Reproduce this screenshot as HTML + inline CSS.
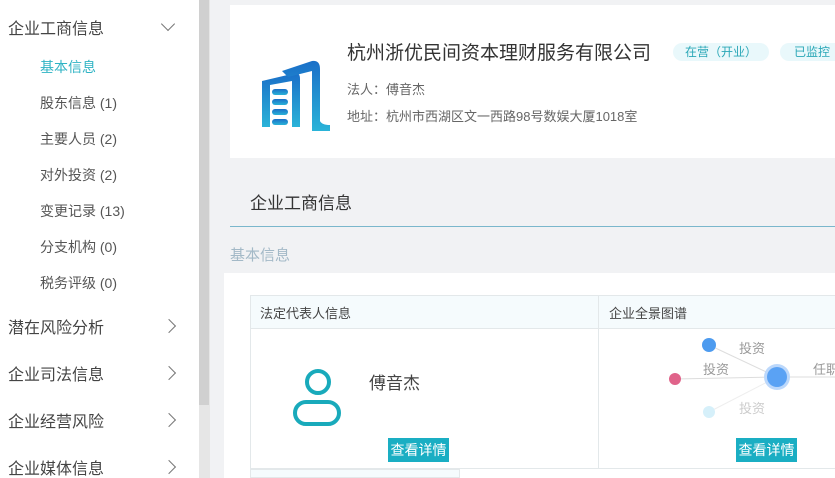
<!DOCTYPE html>
<html><head><meta charset="utf-8"><style>
*{margin:0;padding:0;box-sizing:border-box}
html,body{width:835px;height:478px;overflow:hidden}
body{background:#f1f2f4;font-family:"Liberation Sans","Noto Sans CJK SC",sans-serif;position:relative;color:#333}
.side{position:absolute;left:0;top:0;width:199px;height:478px;background:#fff}
.sb{position:absolute;left:199px;top:0;width:11px;height:478px;background:#e6e6e6}
.thumb{position:absolute;left:199px;top:0;width:10px;height:405px;background:#d0d0d0}
.h{position:absolute;left:8px;font-size:16px;color:#444}
.s{position:absolute;left:40px;font-size:14px;color:#555}
.arr{position:absolute;left:163px;width:10px;height:10px;border-right:1.5px solid #777;border-bottom:1.5px solid #777}
.abs{position:absolute}
.tag{position:absolute;top:38px;height:18px;line-height:18px;font-size:12px;color:#2aa7b7;background:#e9f8fb;border-radius:9px;text-align:center}
.btn{position:absolute;width:61px;height:24px;background:#1aaec3;color:#fff;font-size:14px;line-height:24px;text-align:center}
</style></head><body>
<div class="side">
<div class="h" style="top:15px">企业工商信息</div>
<div class="arr" style="top:19px;transform:rotate(45deg)"></div>
<div class="s" style="top:57px;color:#2fb3c4">基本信息</div>
<div class="s" style="top:93px">股东信息 (1)</div>
<div class="s" style="top:129px">主要人员 (2)</div>
<div class="s" style="top:165px">对外投资 (2)</div>
<div class="s" style="top:201px">变更记录 (13)</div>
<div class="s" style="top:237px">分支机构 (0)</div>
<div class="s" style="top:273px">税务评级 (0)</div>
<div class="h" style="top:314px">潜在风险分析</div>
<div class="arr" style="top:321px;left:164px;transform:rotate(-45deg)"></div>
<div class="h" style="top:361px">企业司法信息</div>
<div class="arr" style="top:368px;left:164px;transform:rotate(-45deg)"></div>
<div class="h" style="top:408px">企业经营风险</div>
<div class="arr" style="top:415px;left:164px;transform:rotate(-45deg)"></div>
<div class="h" style="top:455px">企业媒体信息</div>
<div class="arr" style="top:462px;left:164px;transform:rotate(-45deg)"></div>
</div>
<div class="sb"></div><div class="thumb"></div>

<div class="abs" style="left:230px;top:5px;width:605px;height:153px;background:#fff">
<svg class="abs" style="left:30px;top:50px" width="72" height="80" viewBox="0 0 72 80">
<defs><linearGradient id="g" x1="0" y1="0" x2="0" y2="1"><stop offset="0" stop-color="#1a6fc8"/><stop offset="1" stop-color="#2ab3d8"/></linearGradient></defs>
<path d="M2 26 L36 18 Q40 18 40 24 L40 72 L32 72 L32 26 L10 30 L10 72 L2 72 Z" fill="url(#g)"/>
<path d="M22 16 L52 6 Q60 5 60 14 L60 66 Q62 70 70 70 L70 76 L52 76 L52 16 L28 22 Z" fill="url(#g)"/>
<rect x="12" y="34" width="16" height="6" rx="3" fill="url(#g)"/>
<rect x="12" y="44" width="16" height="6" rx="3" fill="url(#g)"/>
<rect x="12" y="54" width="16" height="6" rx="3" fill="url(#g)"/>
<rect x="12" y="64" width="16" height="6" rx="3" fill="url(#g)"/>
</svg>
<div class="abs" style="left:117px;top:33px;font-size:19px;color:#333">杭州浙优民间资本理财服务有限公司</div>
<div class="tag" style="left:443px;width:96px">在营（开业）</div>
<div class="tag" style="left:550px;width:64px">已监控</div>
<div class="abs" style="left:117px;top:74px;font-size:13px;color:#666">法人：傅音杰</div>
<div class="abs" style="left:117px;top:101px;font-size:13px;color:#666">地址：杭州市西湖区文一西路98号数娱大厦1018室</div>
</div>

<div class="abs" style="left:250px;top:189px;font-size:17px;color:#333">企业工商信息</div>
<div class="abs" style="left:230px;top:226px;width:605px;height:1px;background:#7ab7cc"></div>
<div class="abs" style="left:230px;top:244px;font-size:15px;color:#a3b9c7">基本信息</div>

<div class="abs" style="left:224px;top:273px;width:611px;height:205px;background:#fff"></div>
<div class="abs" style="left:250px;top:295px;width:585px;height:174px;border:1px solid #e3e8ea;border-right:none"></div>
<div class="abs" style="left:251px;top:296px;width:584px;height:33px;background:#f5fbfd;border-bottom:1px solid #e3e8ea"></div>
<div class="abs" style="left:598px;top:296px;width:1px;height:172px;background:#e3e8ea"></div>
<div class="abs" style="left:260px;top:303px;font-size:13px;color:#444">法定代表人信息</div>
<div class="abs" style="left:609px;top:303px;font-size:13px;color:#444">企业全景图谱</div>
<div class="abs" style="left:250px;top:469px;width:210px;height:9px;background:#f5fbfd;border:1px solid #e3e8ea"></div>

<svg class="abs" style="left:290px;top:366px" width="56" height="64"><circle cx="28" cy="16" r="11" fill="none" stroke="#19aabb" stroke-width="4"/><rect x="5" y="36" width="44" height="22" rx="11" fill="none" stroke="#19aabb" stroke-width="4"/></svg>
<div class="abs" style="left:369px;top:369px;font-size:17px;color:#444">傅音杰</div>
<div class="btn" style="left:388px;top:438px">查看详情</div>

<svg class="abs" style="left:599px;top:330px" width="236" height="108">
<line x1="110" y1="15" x2="178" y2="47" stroke="#ddd"/>
<line x1="76" y1="49" x2="178" y2="47" stroke="#ddd"/>
<line x1="110" y1="82" x2="178" y2="47" stroke="#eee"/>
<line x1="178" y1="47" x2="236" y2="47" stroke="#ddd"/>
<circle cx="110" cy="15" r="7" fill="#4d9bef"/>
<circle cx="76" cy="49" r="6" fill="#e0638a"/>
<circle cx="110" cy="82" r="6" fill="#d6f0fa"/>
<circle cx="178" cy="47" r="13" fill="#bcd8fb"/><circle cx="178" cy="47" r="10" fill="#5aa2f4"/>
<text x="140" y="23" font-size="13" fill="#999" font-family="Liberation Sans,Noto Sans CJK SC,sans-serif">投资</text>
<text x="104" y="44" font-size="13" fill="#999" font-family="Liberation Sans,Noto Sans CJK SC,sans-serif">投资</text>
<text x="140" y="83" font-size="13" fill="#ccc" font-family="Liberation Sans,Noto Sans CJK SC,sans-serif">投资</text>
<text x="214" y="44" font-size="13" fill="#999" font-family="Liberation Sans,Noto Sans CJK SC,sans-serif">任职</text>
</svg>
<div class="btn" style="left:736px;top:438px">查看详情</div>
</body></html>
